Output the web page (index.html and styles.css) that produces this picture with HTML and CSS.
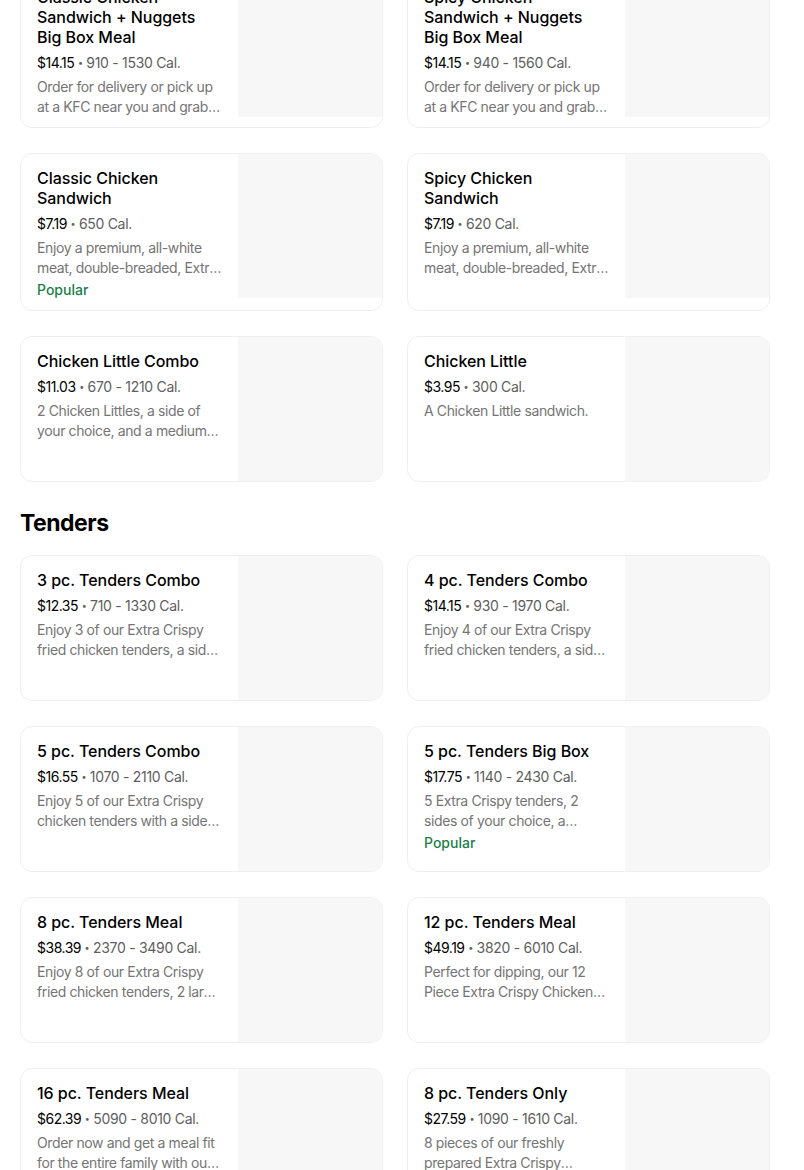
FILE: index.html
```html
<!DOCTYPE html>
<html lang="en">
<head>
<meta charset="utf-8">
<title>KFC Menu</title>
<link rel="stylesheet" href="styles.css">
</head>
<body>
<main class="menu">
  <section class="section">
    <div class="grid">
      <div class="card">
        <div class="info">
          <h3 class="title">Classic Chicken Sandwich + Nuggets Big Box Meal</h3>
          <p class="meta"><span class="price">$14.15</span> <span class="sep">•</span> 910 - 1530 Cal.</p>
          <p class="desc">Order for delivery or pick up at a KFC near you and grab a Classic Chicken Sandwich with nuggets, a side and a drink.</p>
        </div>
        <div class="thumb"></div>
      </div>
      <div class="card">
        <div class="info">
          <h3 class="title">Spicy Chicken Sandwich + Nuggets Big Box Meal</h3>
          <p class="meta"><span class="price">$14.15</span> <span class="sep">•</span> 940 - 1560 Cal.</p>
          <p class="desc">Order for delivery or pick up at a KFC near you and grab a Spicy Chicken Sandwich with nuggets, a side and a drink.</p>
        </div>
        <div class="thumb"></div>
      </div>
      <div class="card">
        <div class="info">
          <h3 class="title">Classic Chicken Sandwich</h3>
          <p class="meta"><span class="price">$7.19</span> <span class="sep">•</span> 650 Cal.</p>
          <p class="desc">Enjoy a premium, all-white meat, double-breaded, Extra Crispy chicken filet on a toasted brioche bun.</p>
          <p class="tag">Popular</p>
        </div>
        <div class="thumb"></div>
      </div>
      <div class="card">
        <div class="info">
          <h3 class="title">Spicy Chicken Sandwich</h3>
          <p class="meta"><span class="price">$7.19</span> <span class="sep">•</span> 620 Cal.</p>
          <p class="desc">Enjoy a premium, all-white meat, double-breaded, Extra Crispy chicken filet with spicy sauce.</p>
        </div>
        <div class="thumb"></div>
      </div>
      <div class="card">
        <div class="info">
          <h3 class="title">Chicken Little Combo</h3>
          <p class="meta"><span class="price">$11.03</span> <span class="sep">•</span> 670 - 1210 Cal.</p>
          <p class="desc">2 Chicken Littles, a side of your choice, and a medium drink.</p>
        </div>
        <div class="thumb"></div>
      </div>
      <div class="card">
        <div class="info">
          <h3 class="title">Chicken Little</h3>
          <p class="meta"><span class="price">$3.95</span> <span class="sep">•</span> 300 Cal.</p>
          <p class="desc">A Chicken Little sandwich.</p>
        </div>
        <div class="thumb"></div>
      </div>
    </div>
  </section>

  <section class="section">
    <h2 class="section-title">Tenders</h2>
    <div class="grid">
      <div class="card">
        <div class="info">
          <h3 class="title">3 pc. Tenders Combo</h3>
          <p class="meta"><span class="price">$12.35</span> <span class="sep">•</span> 710 - 1330 Cal.</p>
          <p class="desc">Enjoy 3 of our Extra Crispy fried chicken tenders, a side of your choice, a dipping sauce and a drink.</p>
        </div>
        <div class="thumb"></div>
      </div>
      <div class="card">
        <div class="info">
          <h3 class="title">4 pc. Tenders Combo</h3>
          <p class="meta"><span class="price">$14.15</span> <span class="sep">•</span> 930 - 1970 Cal.</p>
          <p class="desc">Enjoy 4 of our Extra Crispy fried chicken tenders, a side of your choice, a dipping sauce and a drink.</p>
        </div>
        <div class="thumb"></div>
      </div>
      <div class="card">
        <div class="info">
          <h3 class="title">5 pc. Tenders Combo</h3>
          <p class="meta"><span class="price">$16.55</span> <span class="sep">•</span> 1070 - 2110 Cal.</p>
          <p class="desc">Enjoy 5 of our Extra Crispy chicken tenders with a side of your choice, a dipping sauce and a drink.</p>
        </div>
        <div class="thumb"></div>
      </div>
      <div class="card">
        <div class="info">
          <h3 class="title">5 pc. Tenders Big Box</h3>
          <p class="meta"><span class="price">$17.75</span> <span class="sep">•</span> 1140 - 2430 Cal.</p>
          <p class="desc">5 Extra Crispy tenders, 2 sides of your choice, a biscuit, a cookie and a medium drink.</p>
          <p class="tag">Popular</p>
        </div>
        <div class="thumb"></div>
      </div>
      <div class="card">
        <div class="info">
          <h3 class="title">8 pc. Tenders Meal</h3>
          <p class="meta"><span class="price">$38.39</span> <span class="sep">•</span> 2370 - 3490 Cal.</p>
          <p class="desc">Enjoy 8 of our Extra Crispy fried chicken tenders, 2 large sides, 4 biscuits and dipping sauces.</p>
        </div>
        <div class="thumb"></div>
      </div>
      <div class="card">
        <div class="info">
          <h3 class="title">12 pc. Tenders Meal</h3>
          <p class="meta"><span class="price">$49.19</span> <span class="sep">•</span> 3820 - 6010 Cal.</p>
          <p class="desc">Perfect for dipping, our 12 Piece Extra Crispy Chicken Tenders meal comes with 3 large sides and biscuits.</p>
        </div>
        <div class="thumb"></div>
      </div>
      <div class="card">
        <div class="info">
          <h3 class="title">16 pc. Tenders Meal</h3>
          <p class="meta"><span class="price">$62.39</span> <span class="sep">•</span> 5090 - 8010 Cal.</p>
          <p class="desc">Order now and get a meal fit for the entire family with our 16 pc. Tenders Meal.</p>
        </div>
        <div class="thumb"></div>
      </div>
      <div class="card">
        <div class="info">
          <h3 class="title">8 pc. Tenders Only</h3>
          <p class="meta"><span class="price">$27.59</span> <span class="sep">•</span> 1090 - 1610 Cal.</p>
          <p class="desc">8 pieces of our freshly prepared Extra Crispy chicken tenders.</p>
        </div>
        <div class="thumb"></div>
      </div>
    </div>
  </section>
</main>
</body>
</html>
```

FILE: styles.css
```css
* {
  box-sizing: border-box;
}

html, body {
  margin: 0;
  padding: 0;
  background: #ffffff;
}

body {
  font-family: "Inter", "Noto Sans", "Liberation Sans", sans-serif;
  color: #000000;
  -webkit-font-smoothing: antialiased;
}

.menu {
  width: 750px;
  margin: -28px 0 0 20px;
}

.section + .section {
  margin-top: 27px;
}

.section-title {
  margin: 0 0 18px 0;
  font-size: 23px;
  line-height: 28px;
  font-weight: 700;
  letter-spacing: -0.5px;
}

.grid {
  display: grid;
  grid-template-columns: 1fr 1fr;
  column-gap: 24px;
  row-gap: 25px;
}

.card {
  display: flex;
  align-items: flex-start;
  min-height: 146px;
  border: 1px solid #efefef;
  border-radius: 12px;
  overflow: hidden;
  background: #ffffff;
}

.info {
  flex: 1;
  min-width: 0;
  padding: 14px 16px 10px 16px;
}

.title {
  margin: 0;
  font-size: 16px;
  line-height: 20px;
  font-weight: 500;
  letter-spacing: -0.05px;
  color: #000000;
}

.meta {
  margin: 6px 0 0 0;
  font-size: 14px;
  line-height: 20px;
  color: #5e5e5e;
  letter-spacing: -0.3px;
}

.price {
  color: #000000;
  letter-spacing: -0.5px;
}

.sep {
  font-size: 9px;
  vertical-align: 2px;
  color: #5e5e5e;
}

.desc {
  margin: 4px 0 0 0;
  font-size: 14px;
  line-height: 20px;
  color: #757575;
  letter-spacing: -0.38px;
  display: -webkit-box;
  -webkit-box-orient: vertical;
  -webkit-line-clamp: 2;
  overflow: hidden;
}

.tag {
  margin: 2px 0 0 0;
  font-size: 14px;
  line-height: 20px;
  font-weight: 500;
  color: #1a8048;
}

.thumb {
  flex: 0 0 144px;
  width: 144px;
  height: 144px;
  background: #f7f7f7;
}
```
